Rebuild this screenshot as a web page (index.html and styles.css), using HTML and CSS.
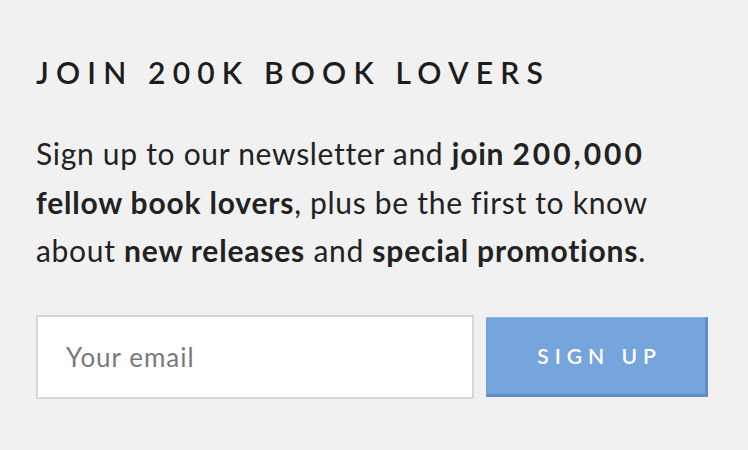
FILE: index.html
```html
<!DOCTYPE html>
<html>
<head>
<meta charset="utf-8">
<link rel="stylesheet" href="styles.css">
</head>
<body>
<section class="newsletter">
  <h2 class="title">JOIN 200K BOOK LOVERS</h2>
  <p class="lead">Sign up to our newsletter and <strong>join <span class="num">200,000</span> fellow book lovers</strong>, plus be the first to know about <strong>new releases</strong> and <strong>special promotions</strong>.</p>
  <form class="signup">
    <input class="email" type="text" placeholder="Your email">
    <button class="btn" type="button">SIGN UP</button>
  </form>
</section>
</body>
</html>
```
FILE: styles.css
```css
html, body {
  margin: 0;
  padding: 0;
  background: #f1f1f1;
}
body {
  font-family: "Lato", "Liberation Sans", sans-serif;
  color: #222;
  font-variant-ligatures: none;
}
.newsletter {
  padding: 55px 0 0 36px;
  width: 672px;
}
.title {
  margin: 0;
  font-size: 30px;
  font-weight: 600;
  letter-spacing: 7.2px;
  line-height: 34px;
  color: #1d1d1d;
}
.lead {
  margin: 40px 0 0 0;
  width: 660px;
  font-size: 30px;
  letter-spacing: 0.7px;
  line-height: 48.5px;
  color: #222;
}
.lead strong {
  font-weight: 700;
  letter-spacing: 0.8px;
}
.lead .num {
  letter-spacing: 3px;
}
.signup {
  margin-top: 40px;
  display: flex;
  align-items: center;
  gap: 12px;
}
.email {
  box-sizing: border-box;
  width: 438px;
  height: 84px;
  border: 2px solid #d6d6d6;
  background: #fff;
  padding: 0 0 0 28px;
  font-family: inherit;
  font-size: 26px;
  letter-spacing: 1px;
  outline: none;
}
.email::placeholder {
  color: #7a7a7a;
}
.btn {
  box-sizing: border-box;
  width: 222px;
  height: 80px;
  background: #76a5de;
  border: none;
  border-top: 1px solid #84b3ee;
  border-right: 3px solid #5f8cc3;
  border-bottom: 3px solid #5f8cc3;
  color: #fff;
  font-family: inherit;
  font-size: 21px;
  font-weight: 600;
  letter-spacing: 6px;
  padding: 0 0 0 8px;
}
```
